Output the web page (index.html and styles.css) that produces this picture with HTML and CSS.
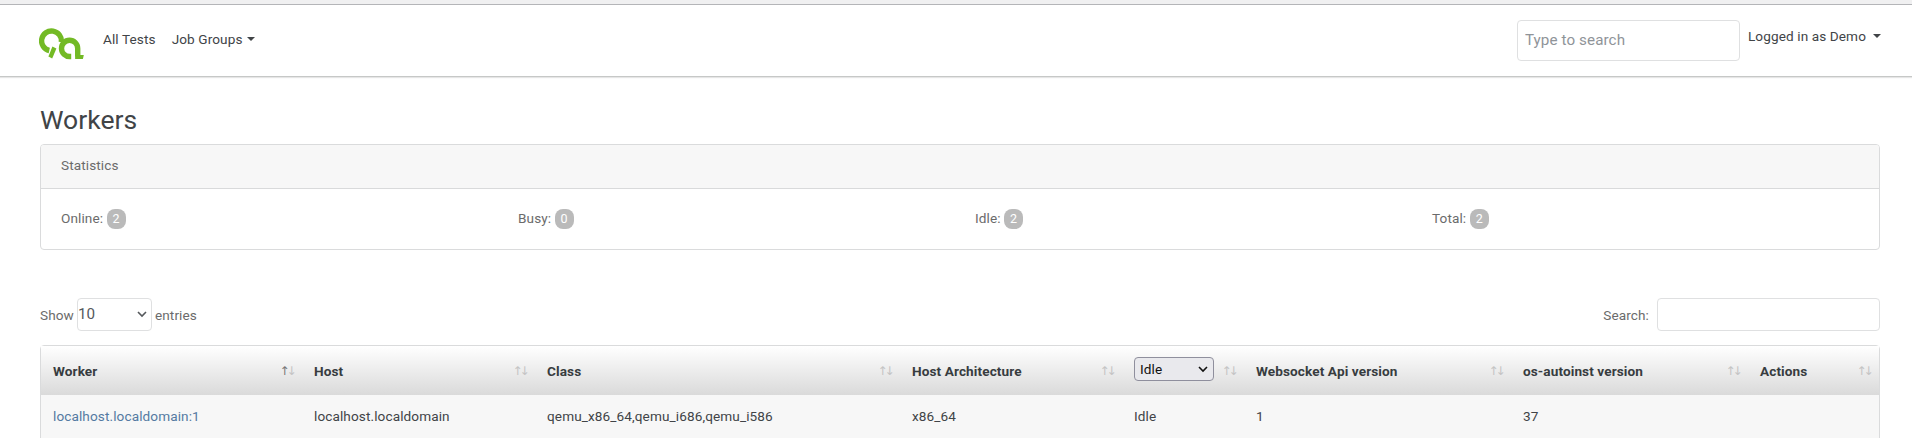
FILE: index.html
```html
<!DOCTYPE html>
<html lang="en">
<head>
<meta charset="utf-8">
<title>Workers</title>
<link rel="stylesheet" href="styles.css">
</head>
<body>
<div class="topstrip"></div>
<nav class="navbar">
  <a class="brand" href="#">
    <svg width="46" height="32" viewBox="0 0 46 32" fill="none" stroke="#73ba25" stroke-width="5.4">
      <path d="M10.3 22.5A9.9 9.9 0 1 1 22.3 14.2"/>
      <path d="M32.2 28.5H30.8A8.1 8.1 0 1 1 38.7 20.4V28.5"/>
      <path d="M36.1 31.1V26.9H44.8L43.9 31.1Z" fill="#73ba25" stroke="none"/>
      <path d="M13.4 18.4L17.4 20.4 13.2 30.4 9.4 28.6Z" fill="#73ba25" stroke="none"/>
    </svg>
  </a>
  <a class="navlink" href="#">All Tests</a>
  <a class="navlink groups" href="#">Job Groups<i class="caret"></i></a>
  <input class="field navsearch" placeholder="Type to search">
  <a class="navlink user" href="#">Logged in as Demo<i class="caret"></i></a>
</nav>
<main class="content">
  <h2 class="title">Workers</h2>
  <section class="card">
    <header class="card-head">Statistics</header>
    <div class="card-body">
      <div class="stat">Online: <span class="badge">2</span></div>
      <div class="stat">Busy: <span class="badge">0</span></div>
      <div class="stat">Idle: <span class="badge">2</span></div>
      <div class="stat">Total: <span class="badge">2</span></div>
    </div>
  </section>
  <div class="toolbar">
    <label class="length">Show
      <span class="picker"><select class="field lengthsel"><option>10</option></select><svg class="chev" width="10" height="7" viewBox="0 0 10 7"><path d="M1 1l4 4 4-4"/></svg></span>
      entries</label>
    <label class="filter">Search:<input class="field filterbox"></label>
  </div>
  <table class="workers">
    <colgroup><col class="c1"><col class="c2"><col class="c3"><col class="c4"><col class="c5"><col class="c6"><col class="c7"><col class="c8"></colgroup>
    <thead>
      <tr>
        <th><div class="th">Worker<span class="sort"><b class="on">↑</b><b>↓</b></span></div></th>
        <th><div class="th">Host<span class="sort"><b>↑</b><b>↓</b></span></div></th>
        <th><div class="th">Class<span class="sort"><b>↑</b><b>↓</b></span></div></th>
        <th><div class="th">Host Architecture<span class="sort"><b>↑</b><b>↓</b></span></div></th>
        <th><div class="th"><span class="picker state"><select class="statesel"><option>Idle</option></select><svg class="chev dark" width="10" height="7" viewBox="0 0 10 7"><path d="M1 1l4 4 4-4"/></svg></span><span class="sort"><b>↑</b><b>↓</b></span></div></th>
        <th><div class="th">Websocket Api version<span class="sort"><b>↑</b><b>↓</b></span></div></th>
        <th><div class="th">os-autoinst version<span class="sort"><b>↑</b><b>↓</b></span></div></th>
        <th><div class="th">Actions<span class="sort"><b>↑</b><b>↓</b></span></div></th>
      </tr>
    </thead>
    <tbody>
      <tr>
        <td><a class="worker" href="#">localhost.localdomain:1</a></td>
        <td>localhost.localdomain</td>
        <td>qemu_x86_64,qemu_i686,qemu_i586</td>
        <td>x86_64</td>
        <td>Idle</td>
        <td>1</td>
        <td>37</td>
        <td></td>
      </tr>
    </tbody>
  </table>
</main>
</body>
</html>
```
FILE: styles.css
```css
* { box-sizing: border-box; }
html { overflow: hidden; }
body { margin: 0; height: 438px; overflow: hidden; background: #fff; color: #6b6b6b; font: 13.6px/20px Roboto, "Liberation Sans", sans-serif; letter-spacing: 0.1px; }
a { text-decoration: none; }
.topstrip { height: 5px; background: #f0f0f1; border-bottom: 1px solid #b4b5b8; }
.navbar { height: 72px; display: flex; align-items: flex-start; padding: 15px 31px 0 39px; border-bottom: 1px solid #c6c8c7; box-shadow: 0 1px 1px #e6e6e6; }
.brand { display: block; width: 64px; height: 32px; margin-top: 8px; }
.brand svg { display: block; }
.navlink { color: #414447; margin-top: 9px; white-space: nowrap; }
.groups { margin-left: 16px; }
.caret { display: inline-block; margin-left: 4px; vertical-align: 3px; border: 4px solid transparent; border-top-color: currentColor; border-bottom: 0; }
.field { border: 1px solid #dfe0e1; border-radius: 4px; background: #fff; color: #55595c; font: 15.2px Roboto, sans-serif; letter-spacing: 0.1px; outline: 0; }
.field::placeholder { color: #8f9499; opacity: 1; }
.navsearch { width: 223px; height: 41px; margin-left: auto; padding: 0 7px 2px; }
.user { margin: 6px 0 0 8px; }
.user .caret { margin-left: 7px; }
.content { padding: 28px 32px 0 40px; }
.title { margin: 0; height: 39px; font-size: 26.5px; line-height: 30px; font-weight: 400; color: #414447; letter-spacing: 0; }
.card { border: 1px solid #dadbdc; border-radius: 4px; }
.card-head { height: 44px; padding: 10px 20px; background: #f7f7f7; border-bottom: 1px solid #d9dadb; border-radius: 3px 3px 0 0; }
.card-body { height: 60px; width: 1848px; padding: 19px 0 0 20px; display: grid; grid-template-columns: repeat(4, 1fr); }
.badge { display: inline-block; min-width: 19px; height: 20px; padding: 0 5px; border-radius: 8px; background: #bababa; color: #fff; text-align: center; font-size: 12.5px; }
.toolbar { display: flex; justify-content: space-between; margin-top: 48px; height: 47px; }
.length, .filter { display: flex; align-items: center; height: 33px; line-height: 18px; }
.length { gap: 3px; }
.filter { gap: 8px; }
.picker { display: inline-grid; align-items: center; }
.picker > * { grid-area: 1 / 1; }
.picker select { appearance: none; }
.chev { justify-self: end; margin-right: 5px; fill: none; stroke: #55595c; stroke-width: 1.6; pointer-events: none; }
.dark { stroke: #111; margin-right: 6px; }
.lengthsel { width: 75px; height: 33px; padding: 0 0 1px; }
.filterbox { width: 223px; height: 33px; }
.workers { width: 1840px; table-layout: fixed; border-collapse: separate; border-spacing: 0; border: 1px solid #dadbdc; border-radius: 4px; color: #414447; }
.c1 { width: 261px; } .c2 { width: 233px; } .c3 { width: 365px; } .c4 { width: 222px; }
.c5 { width: 122px; } .c6 { width: 267px; } .c7 { width: 237px; } .c8 { width: 131px; }
.workers thead { background: linear-gradient(#fff, #dadada); }
.workers th { height: 49px; padding: 1px 7px 0 12px; text-align: left; font-weight: 700; color: #373c40; }
.th { display: flex; align-items: center; justify-content: space-between; height: 20px; white-space: nowrap; }
.sort { display: inline-flex; font: 12px/20px "DejaVu Sans", sans-serif; letter-spacing: 0; }
.sort b { width: 7px; display: flex; justify-content: center; font-weight: 400; color: #c4c4c4; }
.sort .on { color: #777; }
.state { margin-top: -4px; }
.statesel { width: 80px; height: 24px; padding: 0 5px; border: 1px solid #8f8f9d; border-radius: 4px; background: #e9e9ed; color: #111; font: 13.6px Roboto, sans-serif; letter-spacing: 0.1px; }
.workers td { height: 48px; padding: 11px 12px; vertical-align: top; background: #f7f7f7; }
.worker { color: #547aa2; }
```
